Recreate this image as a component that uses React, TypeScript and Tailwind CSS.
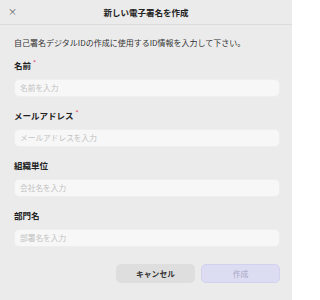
import React from "react";

const font = { fontFamily: '"Noto Sans CJK JP", "Noto Sans", sans-serif' };

function Field({ label, placeholder, required }: { label: string; placeholder: string; required?: boolean }) {
  return (
    <div className="flex flex-col">
      <div className="h-[12px] flex items-center text-[8.5px] font-bold text-[#222] leading-[12px]">
        <span>{label}</span>
        {required && <span className="text-[#e0607a] text-[6px] ml-[2px] -mt-[4px]">*</span>}
      </div>
      <div className="mt-[8px] h-[18px] rounded-[5px] bg-[#f7f7f7] border border-[#eeeeee] flex items-center pl-[5px] text-[7.7px] text-[#c2c2c2]">
        {placeholder}
      </div>
    </div>
  );
}

export default function App() {
  return (
    <div className="w-[292px] h-[300px] bg-[#ebebeb] overflow-hidden" style={font}>
      <div className="relative h-[25px] border-b border-[#dcdcdc] flex items-center justify-center">
        <span className="absolute left-[8px] top-[6px] text-[9px] text-[#555] leading-[12px]">×</span>
        <span className="text-[8.5px] font-bold text-[#222]">新しい電子署名を作成</span>
      </div>
      <div className="pl-[13px] pr-[12px]">
        <div className="mt-[12px] h-[12px] leading-[12px] text-[8px] text-[#333] pl-[1px]">
          自己署名デジタルIDの作成に使用するID情報を入力して下さい。
        </div>
        <div className="mt-[10px] flex flex-col gap-[12px] pl-[1px]">
          <Field label="名前" placeholder="名前を入力" required />
          <Field label="メールアドレス" placeholder="メールアドレスを入力" required />
          <Field label="組織単位" placeholder="会社名を入力" />
          <Field label="部門名" placeholder="部署名を入力" />
        </div>
        <div className="mt-[17px] flex justify-end gap-[6px]">
          <div className="w-[79px] h-[19px] rounded-[5px] bg-[#dedede] flex items-center justify-center text-[7.8px] font-bold text-[#333]">
            キャンセル
          </div>
          <div className="w-[79px] h-[19px] rounded-[5px] bg-[#dcdcf2] border border-[#d2d2ee] flex items-center justify-center text-[7.8px] text-[#a8a8c4]">
            作成
          </div>
        </div>
      </div>
    </div>
  );
}
